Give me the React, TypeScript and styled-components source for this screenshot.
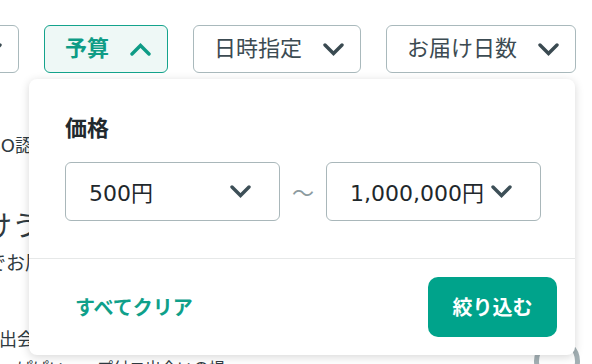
import * as React from "react";
import styled, { createGlobalStyle } from "styled-components";

const GlobalStyle = createGlobalStyle`
  body {
    margin: 0;
    background: #ffffff;
    font-family: "DejaVu Sans", "Noto Sans CJK JP", sans-serif;
    overflow: hidden;
  }
`;

const Page = styled.div`
  position: relative;
  width: 592px;
  height: 364px;
  overflow: hidden;
  color: #333d42;
`;

const FilterBar = styled.div`
  display: flex;
  gap: 25px;
  padding-top: 25px;
  margin-left: -149px;
`;

const FilterButton = styled.button<{ $active?: boolean }>`
  display: flex;
  align-items: center;
  gap: 21px;
  height: 48px;
  padding: 0 16px 0 20px;
  border-radius: 6px;
  border: 1px solid ${(p) => (p.$active ? "#14a38c" : "#a9b9bc")};
  background: ${(p) => (p.$active ? "#eef8f6" : "#ffffff")};
  color: ${(p) => (p.$active ? "#0e9c86" : "#3c4b52")};
  font-family: inherit;
  font-size: 22px;
  font-weight: ${(p) => (p.$active ? 700 : 400)};
  line-height: 1;
  white-space: nowrap;
  flex-shrink: 0;
`;

const Background = styled.div`
  display: flex;
  flex-direction: column;
`;

const BgLine = styled.div<{ $size: number; $top: number; $shift: number }>`
  font-size: ${(p) => p.$size}px;
  line-height: 1.4;
  margin-top: ${(p) => p.$top}px;
  margin-left: ${(p) => p.$shift}px;
  color: #2f3a40;
  white-space: nowrap;
`;

const BottomRow = styled.div`
  display: flex;
  justify-content: space-between;
  align-items: flex-start;
  margin-top: -14px;
  padding: 0 12px 0 17px;
`;

const BottomText = styled.div`
  font-size: 16px;
  line-height: 1.4;
  padding-top: 20px;
  color: #2f3a40;
  white-space: nowrap;
`;

const Ring = styled.div`
  width: 36px;
  height: 36px;
  border-radius: 50%;
  border: 5px solid #a3b0b4;
  background: #ffffff;
`;

const Panel = styled.div`
  position: absolute;
  top: 79px;
  left: 29px;
  width: 546px;
  height: 276px;
  background: #ffffff;
  border-radius: 8px;
  box-shadow: 0 2px 10px rgba(0, 0, 0, 0.16);
  display: flex;
  flex-direction: column;
`;

const PanelBody = styled.div`
  padding: 35px 34px 37px 36px;
  border-bottom: 1px solid #e6e8e8;
`;

const Label = styled.div`
  font-size: 22px;
  font-weight: 700;
  line-height: 1.4;
  color: #222a2e;
  margin-bottom: 17px;
`;

const RangeRow = styled.div`
  display: flex;
  align-items: center;
  justify-content: space-between;
`;

const Select = styled.div`
  display: flex;
  align-items: center;
  justify-content: space-between;
  box-sizing: border-box;
  width: 215px;
  height: 59px;
  padding: 0 28px 0 23px;
  border: 1px solid #a9b7ba;
  border-radius: 6px;
  font-size: 22px;
  color: #1f282c;
  white-space: nowrap;
`;

const Tilde = styled.span`
  font-family: "Noto Sans CJK JP", sans-serif;
  font-size: 22px;
  color: #8c9ba0;
`;

const Footer = styled.div`
  flex: 1;
  display: flex;
  align-items: center;
  justify-content: space-between;
  padding: 0 18px 0 36px;
`;

const ClearButton = styled.button`
  background: none;
  border: none;
  padding: 0 10px;
  font-family: inherit;
  font-size: 20px;
  font-weight: 700;
  color: #0fa08a;
`;

const ApplyButton = styled.button`
  width: 129px;
  height: 60px;
  border: none;
  border-radius: 10px;
  background: #00a38b;
  color: #ffffff;
  font-family: inherit;
  font-size: 20px;
  font-weight: 700;
`;

const Chevron: React.FC<{ up?: boolean; color: string }> = ({ up, color }) => (
  <svg width="21" height="13" viewBox="0 0 21 13">
    <polyline
      points={up ? "2,11 10.5,2.5 19,11" : "2,2 10.5,10.5 19,2"}
      fill="none"
      stroke={color}
      strokeWidth="3.4"
      strokeLinecap="round"
      strokeLinejoin="miter"
    />
  </svg>
);

const filters = [
  { label: "配送方法", active: false },
  { label: "予算", active: true },
  { label: "日時指定", active: false },
  { label: "お届け日数", active: false },
];

export default function App() {
  return (
    <Page>
      <GlobalStyle />
      <FilterBar>
        {filters.map((f) => (
          <FilterButton key={f.label} $active={f.active}>
            {f.label}
            <Chevron up={f.active} color={f.active ? "#0e9c86" : "#3a4a51"} />
          </FilterButton>
        ))}
      </FilterBar>

      <Background>
        <BgLine $size={18} $top={60} $shift={-16}>ISO認証を取得</BgLine>
        <BgLine $size={28} $top={49} $shift={-16}>けうれしいギフト</BgLine>
        <BgLine $size={19} $top={4} $shift={-13}>でお届けします</BgLine>
        <BgLine $size={18} $top={50} $shift={-1}>出会いの場</BgLine>
        <BottomRow>
          <BottomText>ぱぱい・ップ付コ出会いの場</BottomText>
          <Ring />
        </BottomRow>
      </Background>

      <Panel>
        <PanelBody>
          <Label>価格</Label>
          <RangeRow>
            <Select>
              500円
              <Chevron color="#3d4f57" />
            </Select>
            <Tilde>～</Tilde>
            <Select>
              1,000,000円
              <Chevron color="#3d4f57" />
            </Select>
          </RangeRow>
        </PanelBody>
        <Footer>
          <ClearButton>すべてクリア</ClearButton>
          <ApplyButton>絞り込む</ApplyButton>
        </Footer>
      </Panel>
    </Page>
  );
}
